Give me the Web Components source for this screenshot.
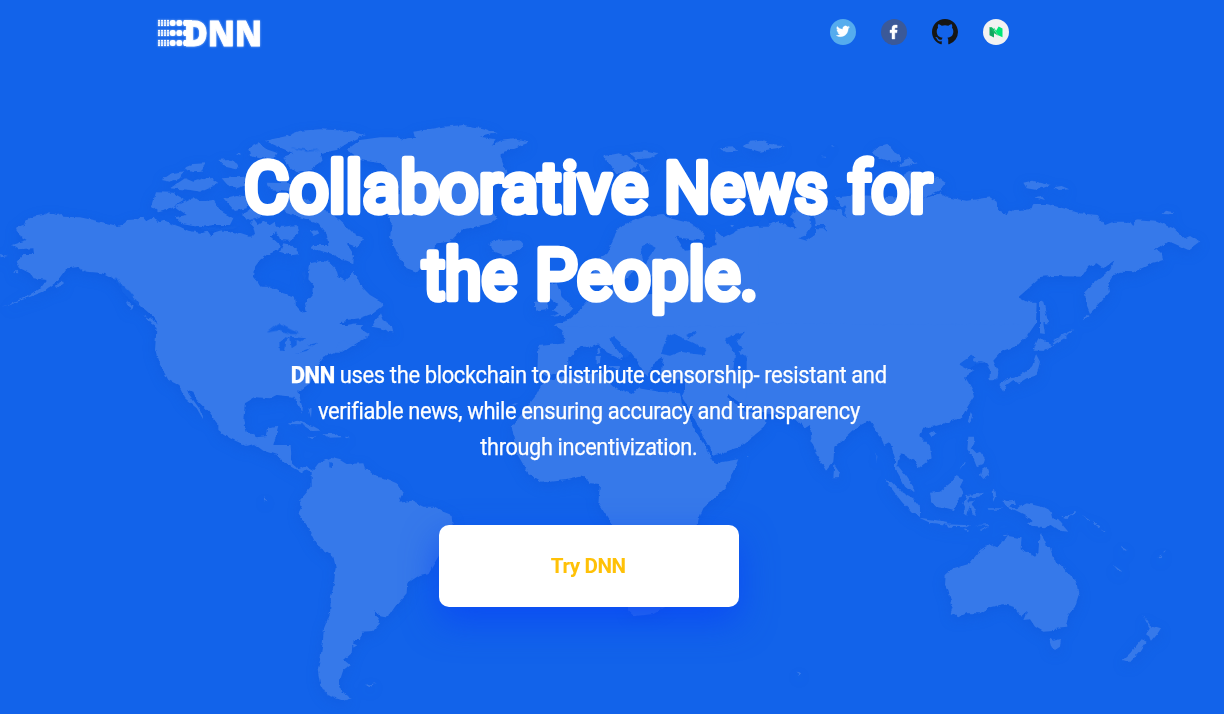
<!DOCTYPE html>
<html lang="en">
<head>
<meta charset="utf-8">
<title>DNN</title>
<style>
body{margin:0;background:#1263ea;overflow:hidden;font-family:Roboto,"Open Sans",sans-serif;color:#fff}
</style>
</head>
<body>
<dnn-page></dnn-page>
<script>
const define=(name,html,setup)=>customElements.define(name,class extends HTMLElement{
  constructor(){super();const t=document.createElement('template');t.innerHTML=html;this.attachShadow({mode:'open'}).append(t.content.cloneNode(true));}
  connectedCallback(){if(setup)setup(this);}
});

define('world-map',`
<style>:host{display:block;width:1224px;height:714px}svg{display:block}.land{fill:#3679ea}.sea{fill:#1463e7}</style>
<svg width="1224" height="714" viewBox="0 0 1224 714" aria-hidden="true">
<defs><filter id="coast" x="0" y="0" width="1224" height="714" filterUnits="userSpaceOnUse" color-interpolation-filters="sRGB">
<feTurbulence type="fractalNoise" baseFrequency=".16" numOctaves="3" seed="4" result="n"/>
<feDisplacementMap in="SourceGraphic" in2="n" scale="4" xChannelSelector="R" yChannelSelector="G" result="d"/>
<feDropShadow in="d" dx="0" dy="4" stdDeviation="6" flood-color="#0b50cf" flood-opacity=".28"/></filter></defs>
<g filter="url(#coast)">
<g class="land" transform="translate(0 110) scale(.33333)">
<path d="M48 353L75 343 85 325 108 318 130 315 145 306 170 315 185 312 190 320 240 322 290 332 330 342 352 348 370 342 385 330 412 328 430 320 440 332 462 322 475 338 492 332 510 340 540 350 565 362 600 368 620 362 632 380 640 368 665 360 700 370 725 372 750 380 765 372 760 350 750 340 760 325 775 345 790 335 810 345 825 335 828 360 812 380 840 405 835 420 800 435 780 450 765 470 762 500 785 530 815 530 850 550 885 560 888 590 905 608 920 605 915 580 940 550 942 525 925 505 930 460 965 452 985 455 1010 480 1015 500 1035 512 1050 500 1060 485 1075 510 1090 535 1110 555 1145 575 1147 590 1120 610 1080 625 1040 630 1010 650 960 690 1000 670 1040 645 1070 640 1060 665 1090 685 1105 680 1070 700 1030 725 468 725 470 655 485 655 460 620 430 595 380 545 350 510 310 490 260 485 230 472 200 475 170 515 130 545 60 572 5 590 80 560 125 530 140 510 100 505 90 490 60 475 50 455 70 432 102 432 100 415 55 418 35 405 80 390 55 375z"/>
<path d="M468 247L520 248 555 270 510 298 475 307 455 290zM525 290L555 275 580 262 600 275 640 270 665 305 700 325 690 345 640 345 600 352 545 342 525 322 560 315zM485 210L515 190 550 184 540 205 510 215zM510 235L555 205 580 215 625 200 655 222 600 245 570 240zM550 175L580 162 615 160 605 185 580 187zM655 150L685 147 715 165 710 178 675 170zM665 205L730 200 740 225 710 235 680 222zM670 265L710 255 745 260 740 295 705 303zM745 115L775 100 800 118 830 128 820 145 780 145 750 138zM795 92L860 78 900 62 960 58 1040 62 1095 75 1050 95 1010 120 960 130 965 155 930 180 890 190 860 165 850 140 880 130 830 108zM800 218L900 220 910 235 860 245 810 240zM725 315L750 300 790 300 780 320 750 330zM820 350L850 350 890 345 895 370 870 392 840 390 830 375zM840 425L850 400 875 405 900 432 880 435zM850 265L910 265 960 290 1000 315 1035 345 1060 370 1092 385 1072 412 1040 400 1062 435 1060 460 1020 445 990 430 930 415 940 405 985 405 980 370 955 340 910 325 860 310 830 290zM1115 650L1140 610 1148 630 1175 645 1180 665 1140 655zM1160 315L1200 320 1200 335 1175 330zM930 365L950 358 958 370 940 378zM165 530L185 512 190 518 172 535zM380 570L398 590 392 600zM430 612L480 645 485 660 455 642zM708 130l12-4 2 9zM0 432l24 6-22 4zM38 488l15-6 2 8z"/></g>
<g class="land" transform="translate(380 110) scale(.33333)">
<path d="M-100 120L-60 90 0 82 50 82 70 90 105 85 100 65 190 50 250 45 310 55 350 70 300 80 350 88 335 108 360 92 400 88 450 97 400 115 365 130 365 150 380 190 340 220 330 290 350 325 330 340 245 360 210 395 170 400 150 440 110 485 80 475 50 430 30 380 35 340 20 310 60 250 40 200 0 160 -60 150z"/>
<path d="M640 460L680 430 700 390 710 360 750 335 800 318 850 312 870 325 930 340 975 370 970 392 910 385 888 380 915 422 1010 405 1003 360 1030 382 1085 355 1150 345 1200 330 1200 700 555 700 555 665 520 645 560 632 600 600 620 575 680 570 690 545 720 520 735 555 880 550 780 500 720 510 660 510 640 490z"/>
<path d="M510 620L540 610 515 600 535 585 510 565 510 525 530 520 545 560 580 595 560 617zM465 602L465 575 500 570 505 597zM325 405L345 390 370 392 415 388 430 405 410 425 375 437 345 425 330 412zM670 138L715 130 740 138 775 160 740 190 710 190 690 165zM750 130L790 120 835 130 810 145 770 148zM775 160L810 182 785 190zM1015 115L1060 112 1075 125 1040 127zM1085 110L1110 95 1145 92 1190 112 1140 125zM1050 345L1065 345 1060 352zM1100 265L1130 215 1150 215 1165 285 1120 290z"/></g>
<g class="land" transform="translate(760 110) scale(.33333)">
<path d="M-5 345L60 340 110 355 90 320 110 295 150 290 225 300 245 290 225 262 300 255 480 268 540 250 560 262 620 272 690 262 710 275 715 300 740 312 760 300 815 298 820 282 860 282 910 295 960 310 1010 315 1035 345 1060 335 1110 335 1120 348 1130 328 1190 332 1240 355 1275 385 1290 378 1318 395 1285 420 1240 400 1225 395 1200 415 1180 415 1205 430 1210 450 1180 458 1120 487 1080 485 1060 495 1045 520 1050 545 1020 580 990 610 978 580 975 545 1000 520 1050 480 1065 450 1030 475 1010 460 985 470 965 500 880 498 845 500 800 540 775 562 800 575 830 575 828 640 800 680 760 712 720 725 -5 740z"/>
<path d="M335 130L350 112 380 102 395 120 420 135 420 155 390 155 360 145zM418 172L430 150 450 145 473 160 440 168zM430 195L450 183 480 190 530 200 557 218 540 240 490 265 450 250zM790 218L815 212 870 225 830 240 800 235zM880 232L905 228 928 238 900 240zM825 262L845 258 855 270zM1205 312L1215 302 1243 307 1230 313zM840 570L850 575 865 640 850 640 855 672 840 670zM820 718L835 685 850 695 875 710 850 722zM875 700L915 675 920 680 880 705zM970 630l10-16 6 4zM0 100L25 102 75 105 50 115 10 120zM212 110l15-1-8 4zM182 140l15 0 0 4z"/></g>
<g class="land" transform="translate(130 330) scale(.33333)">
<path d="M80 -15L75 60 85 95 115 150 145 165 165 205 200 235 222 272 215 245 175 190 172 180 190 185 200 210 235 245 265 285 265 300 300 325 350 348 372 342 400 362 440 375 465 400 500 420 515 430 530 418 545 425 545 470 510 510 515 530 505 550 530 585 555 635 570 655 610 680 617 710 612 760 603 800 600 850 582 895 578 940 570 990 563 1020 570 1060 590 1095 640 1112 665 1105 635 1085 627 1060 640 1020 660 1005 642 990 665 970 668 930 690 930 695 905 730 903 750 880 735 855 735 840 745 855 775 860 795 830 830 790 832 760 870 735 895 730 925 680 945 640 968 585 965 555 940 545 915 530 880 530 845 512 805 518 818 490 800 460 765 445 740 440 705 415 700 400 650 402 630 390 602 383 565 400 550 420 528 408 505 418 485 400 482 345 430 345 445 290 415 295 410 318 380 322 350 305 340 270 345 220 375 202 420 205 440 195 490 200 515 248 515 225 505 185 540 160 560 110 580 80 615 65 620 45 640 30 660 45 720 15 690 -5 700 -15z"/>
<path d="M475 282L500 272 540 285 572 302 545 303 515 283zM580 310L610 308 635 322 600 323zM535 320l20 2-8 6zM645 320l15 2-12 3zM535 235l10 3-2 25zM705 1065L740 1060 715 1070zM940 1093L960 1104zM402 502l10 12-10 0zM667 940l15 6-10 6zM760 -8l20 8-5 6z"/></g>
<g class="land" transform="translate(480 330) scale(.33333)">
<path d="M245 -10L255 40 175 48 172 120 200 140 235 130 265 105 265 85 300 50 330 50 355 40 380 70 425 90 430 80 390 30 400 22 455 70 470 90 500 140 520 100 550 80 545 110 540 140 560 150 615 148 615 180 605 200 635 250 665 310 700 378 780 350 855 290 860 275 830 250 790 240 745 205 745 195 790 225 840 235 880 250 980 265 970 -10z"/>
<path d="M190 152L260 140 335 132 380 130 385 155 400 170 455 192 475 175 540 185 600 190 605 215 640 290 690 375 705 400 775 388 740 470 670 535 655 570 640 700 555 832 520 852 465 858 445 840 400 590 355 520 360 462 330 460 310 438 260 450 185 458 145 430 110 370 95 290 165 200zM352 55l6-4 3 18-7 4zM350 78h12l-2 22h-10zM385 108h35l-5 14zM95 220l20-4-10 7zM797 378h10l-6 3z"/></g>
<g class="land" transform="translate(780 330) scale(.33333)">
<path d="M-100 -20L760 -15 740 15 710 50 685 50 660 70 640 92 655 125 652 148 628 148 630 120 615 97 580 100 560 118 585 122 555 140 575 175 582 200 560 235 545 262 500 278 460 290 430 290 418 315 450 350 455 385 415 415 405 395 365 370 355 385 352 405 380 440 400 470 400 490 375 470 360 440 345 415 345 385 330 335 312 345 300 315 270 272 235 288 200 320 163 350 160 395 138 422 110 375 95 335 90 285 75 295 50 270 20 255 -100 240z"/>
<path d="M160 442L163 405 180 430 175 442zM780 25L815 45 790 62 760 62 775 48zM768 72L780 95 770 135 740 145 715 160 700 150 680 165 672 185 658 165 690 142 720 138 755 110zM563 275L572 250 580 255 570 280zM447 310L460 302 470 308 455 322zM565 320L582 320 583 340 575 355 590 370 600 365 615 385 610 402 590 410 580 385 562 358zM600 435L605 420 620 410 627 435 610 447zM535 420L558 392 555 402zM450 488L480 485 510 460 530 435 550 450 540 470 550 490 535 510 522 543 490 535 465 530 453 510zM315 450L340 458 365 485 400 505 420 530 420 558 395 548 365 515zM418 563L450 568 500 575 505 585 450 578zM500 583L570 586 560 592 505 590zM560 495L580 493 612 488 600 500 570 502 560 515 585 512 575 525 592 555 575 550 568 530 562 557 553 550 555 530 550 520zM598 602L632 587 610 602zM550 597l18 5-5 4zM585 586l45-4-5 5zM670 512L700 510 705 525 685 525 710 535 740 520 790 532 815 545 820 565 840 575 865 605 840 602 815 585 790 595 770 592 740 583 755 570 735 555 705 540 680 530zM635 485l10-5 3 15-8 20zM620 535h45l-3 4h-40zM840 558L870 558 885 542 888 550 860 565zM905 556l25 15 0 5zM935 572l28 18-3 5-22-17zM962 595l17 12-8-2zM497 735L520 715 570 700 600 660 630 642 655 652 665 632 685 618 725 625 722 655 765 680 775 668 778 620 785 610 797 645 810 652 820 690 850 710 865 730 890 755 896 795 885 830 865 855 858 890 830 893 820 903 790 905 765 890 750 868 730 870 742 842 722 860 700 830 670 823 630 832 600 850 560 850 535 862 512 850 518 830 505 780 495 765zM807 925L820 932 843 927 840 950 825 960 815 952zM1087 855L1100 870 1110 885 1143 895 1130 915 1112 937 1108 920 1098 913 1110 895zM1085 928L1100 935 1080 965 1050 997 1028 990 1050 970zM1000 705L1028 725 1015 722zM1025 650l15 10-8 2zM1132 682l10-7 5 6zM1145 670l13-6-5 6zM52 1025L68 1030 55 1037zM290 370l2 10-3 20zM665 616l20-2-10 5zM820 30l60-32 0 4-58 32zM637 237l20-20z"/></g>
<g class="sea" transform="translate(0 110) scale(.33333)"><path d="M800 668L835 640 865 655 900 672 870 672 840 660zM345 503L390 545 420 585 412 588 375 555zM1025 477l10 8-15 18zM905 490L920 475 910 530z"/><path d="M965 120L930 120 870 112 920 125zM840 210L900 208 840 215zM575 350L640 355 720 345 700 358 630 363z"/></g>
<g class="sea" transform="translate(130 330) scale(.33333)"><path d="M450 65L448 35 465 22 480 25 465 40 462 65zM480 20L525 25 515 35 500 30 500 45 485 55zM495 70L540 55 530 63zM530 45L565 38 555 46zM598 395l8 5 0 14-8-2z"/></g>
<g class="sea" transform="translate(380 110) scale(.33333)"><path d="M745 500L790 450 780 415 810 400 830 410 800 450 790 470 800 505 840 490 840 505 770 550 745 535zM1065 240L1080 235 1080 280 1120 305 1100 310z"/></g>
<g class="sea" transform="translate(480 330) scale(.33333)"><path d="M543 72L560 20 580 10 610 25 640 38 680 60 675 75 640 72 600 65 570 77zM615 15L645 3 650 8 630 25zM733 28L770 10 795 5 770 35 790 55 775 65 800 80 800 120 760 120 765 70zM388 22L400 22 455 70 435 85 400 48z"/></g>
<g class="sea" transform="translate(760 110) scale(.33333)"><path d="M148 300L160 310 165 345 195 345 203 367 190 355 165 355 165 375 140 392 115 385 140 375 155 352zM215 285L255 290 258 325 240 300zM0 320L25 330 30 350 0 350z"/></g>
<g class="sea" transform="translate(780 330) scale(.33333)"><path d="M538 102L575 76 583 82 578 95 612 93 585 103 570 118 555 112z"/></g>
</g></svg>`);

define('dnn-logo',`
<style>:host{display:block;width:104px;height:30px}svg{display:block;overflow:visible;filter:drop-shadow(0 0 1px #ffffff90)}text{font:800 35px "Open Sans",sans-serif;fill:#fff}</style>
<svg width="104" height="30" viewBox="157 18 104 30"><g fill="#fff" id="dots"></g>
<text x="184" y="45.5" textLength="78" lengthAdjust="spacingAndGlyphs" stroke="#fff" stroke-width=".8">DNN</text></svg>`,el=>{
  let s='';
  for(const y of [23,33,43]){
    for(const x of [159,162,165,168])for(const d of [-2.2,0,2.2])s+=`<circle cx="${x}" cy="${y+d}" r="1.1"/>`;
    for(const x of [172.7,179.3,186])s+=`<rect x="${x-2.9}" y="${y-2.9}" width="5.8" height="5.8" rx="2.2"/>`;
    s+=`<rect x="184" y="${y-2.9}" width="8" height="5.8"/>`;
  }
  el.shadowRoot.querySelector('#dots').innerHTML=s;
});

const icons={
twitter:`<circle cx="13" cy="13" r="13" fill="#55acee"/><path transform="translate(6.3 5.7) scale(.55)" fill="#fff" stroke="#fff" stroke-width=".6" d="M23.95 4.57a10 10 0 0 1-2.82.77 4.96 4.96 0 0 0 2.16-2.72c-.95.55-2 .95-3.13 1.18a4.92 4.92 0 0 0-8.38 4.48C7.69 8.1 4.07 6.13 1.64 3.16a4.93 4.93 0 0 0 1.52 6.57 4.9 4.9 0 0 1-2.23-.61v.06a4.92 4.92 0 0 0 3.95 4.83 5 5 0 0 1-2.21.08 4.94 4.94 0 0 0 4.6 3.42A9.87 9.87 0 0 1 0 19.54a14 14 0 0 0 7.55 2.21c9.05 0 14-7.5 14-13.98 0-.21 0-.42-.02-.63a9.94 9.94 0 0 0 2.46-2.55z"/>`,
facebook:`<circle cx="13" cy="13" r="13" fill="#3b5998"/><path fill="#fff" stroke="#fff" stroke-width=".4" d="M11 20v-6.2H9V11.100h2V9.200C11 7 12.200 6.100 14.200 6.100h2v2.600h-1.300c-.9 0-1.100.5-1.100 1.200v1.200h2.400l-.35 2.700h-2.050V20z"/>`,
github:`<path transform="scale(1.625)" fill="#161614" d="M8 0C3.58 0 0 3.58 0 8c0 3.54 2.29 6.53 5.470 7.590.4.070.55-.17.55-.38 0-.19-.01-.82-.01-1.490-2.010.37-2.530-.49-2.690-.94-.090-.23-.48-.94-.82-1.130-.28-.15-.68-.52-.01-.53.63-.01 1.080.58 1.230.82.72 1.210 1.870.87 2.330.66.070-.52.28-.87.51-1.070-1.780-.2-3.640-.89-3.640-3.950 0-.87.31-1.590.82-2.150-.08-.2-.36-1.020.08-2.120 0 0 .67-.21 2.200.82a7.600 7.600 0 0 1 4 0c1.530-1.040 2.200-.82 2.200-.82.44 1.100.16 1.920.08 2.120.51.56.82 1.270.82 2.150 0 3.070-1.870 3.750-3.650 3.950.29.25.54.73.54 1.480 0 1.070-.01 1.930-.01 2.200 0 .21.15.46.55.38A8 8 0 0 0 16 8c0-4.420-3.580-8-8-8z"/>`,
medium:`<circle cx="13" cy="13" r="13" fill="#f2f2f2"/><path fill="#12a560" d="M6.500 8l4.500 2v8.500l-4.500-2.200z"/><path fill="#00e676" d="M10.900 8.500l2.200 3.300L15.600 7.500l3.900 2v8.700l-4.300-2-4.300-6.200z"/><path fill="#16bd68" d="M7 8l2 .2 6.500 8.500-4.500-2.500z"/>`};
customElements.define('social-icon',class extends HTMLElement{
  constructor(){super();this.attachShadow({mode:'open'});}
  connectedCallback(){this.shadowRoot.innerHTML=`<style>:host{display:block;width:26px;height:26px}svg{display:block}</style><svg width="26" height="26" viewBox="0 0 26 26" role="img" aria-label="${this.getAttribute('name')}">${icons[this.getAttribute('name')]}</svg>`;}
});

define('hero-title',`
<style>:host{display:block}h1{margin:0}svg{display:block;overflow:visible}text{font:400 69.5px Roboto,sans-serif;fill:#fff;stroke:#fff;stroke-width:6.4px;stroke-linejoin:round;stroke-linecap:round}</style>
<h1><svg width="1177" height="87" viewBox="0 0 1177 87"><text y="58.5"><tspan x="244" textLength="404" lengthAdjust="spacingAndGlyphs">Collaborative</tspan> <tspan x="664" textLength="164" lengthAdjust="spacingAndGlyphs">News</tspan> <tspan x="848" textLength="84" lengthAdjust="spacingAndGlyphs">for</tspan></text></svg>
<svg width="1177" height="87" viewBox="0 0 1177 87"><text y="58.5"><tspan x="423" textLength="94" lengthAdjust="spacingAndGlyphs">the</tspan> <tspan x="535" textLength="223" lengthAdjust="spacingAndGlyphs">People.</tspan></text></svg></h1>`);

/* One line of text, condensed horizontally to the width it is given. */
define('fit-line',`<style>:host{display:block;white-space:nowrap}span{display:inline-block;transform-origin:50% 50%;letter-spacing:-.4px}</style><span><slot></slot></span>`,el=>{
  const s=el.shadowRoot.querySelector('span'),w=+el.getAttribute('width');
  s.style.transform='scaleX('+w/s.getBoundingClientRect().width+')';
});

define('cta-button',`
<style>:host{display:block}button{display:block;width:300px;height:82px;border:0;border-radius:10px;background:#fff;color:#ffc107;font:700 21px/82px Roboto,sans-serif;padding:0;text-align:center;box-shadow:0 15px 35px #0a47f5d0}</style>
<button><slot></slot></button>`);

define('dnn-page',`
<style>
:host{display:grid;width:1224px;height:714px;background:#1263ea;overflow:hidden}
world-map,.content{grid-area:1/1}
.content{display:flex;flex-direction:column;align-items:center;width:1177px;z-index:1}
header{display:flex;justify-content:space-between;align-self:flex-start;width:852px;height:26px;padding:19px 0 0 157px}
nav{display:flex;gap:25px}
dnn-logo{margin-top:-1px}
hero-title{margin-top:108px}
.lead{margin-top:30px;font:400 24px/36px Roboto,sans-serif;text-align:center;-webkit-text-stroke:.25px #fff}
b{font-weight:800}
cta-button{margin-top:60px}
</style>
<world-map></world-map>
<div class="content">
<header><dnn-logo></dnn-logo><nav><social-icon name="twitter"></social-icon><social-icon name="facebook"></social-icon><social-icon name="github"></social-icon><social-icon name="medium"></social-icon></nav></header>
<hero-title></hero-title>
<div class="lead"><fit-line width="596"><b>DNN</b> uses the blockchain to distribute censorship- resistant and</fit-line><fit-line width="542">verifiable news, while ensuring accuracy and transparency</fit-line><fit-line width="217">through incentivization.</fit-line></div>
<cta-button><fit-line width="75">Try DNN</fit-line></cta-button>
</div>`);
</script>
</body>
</html>
